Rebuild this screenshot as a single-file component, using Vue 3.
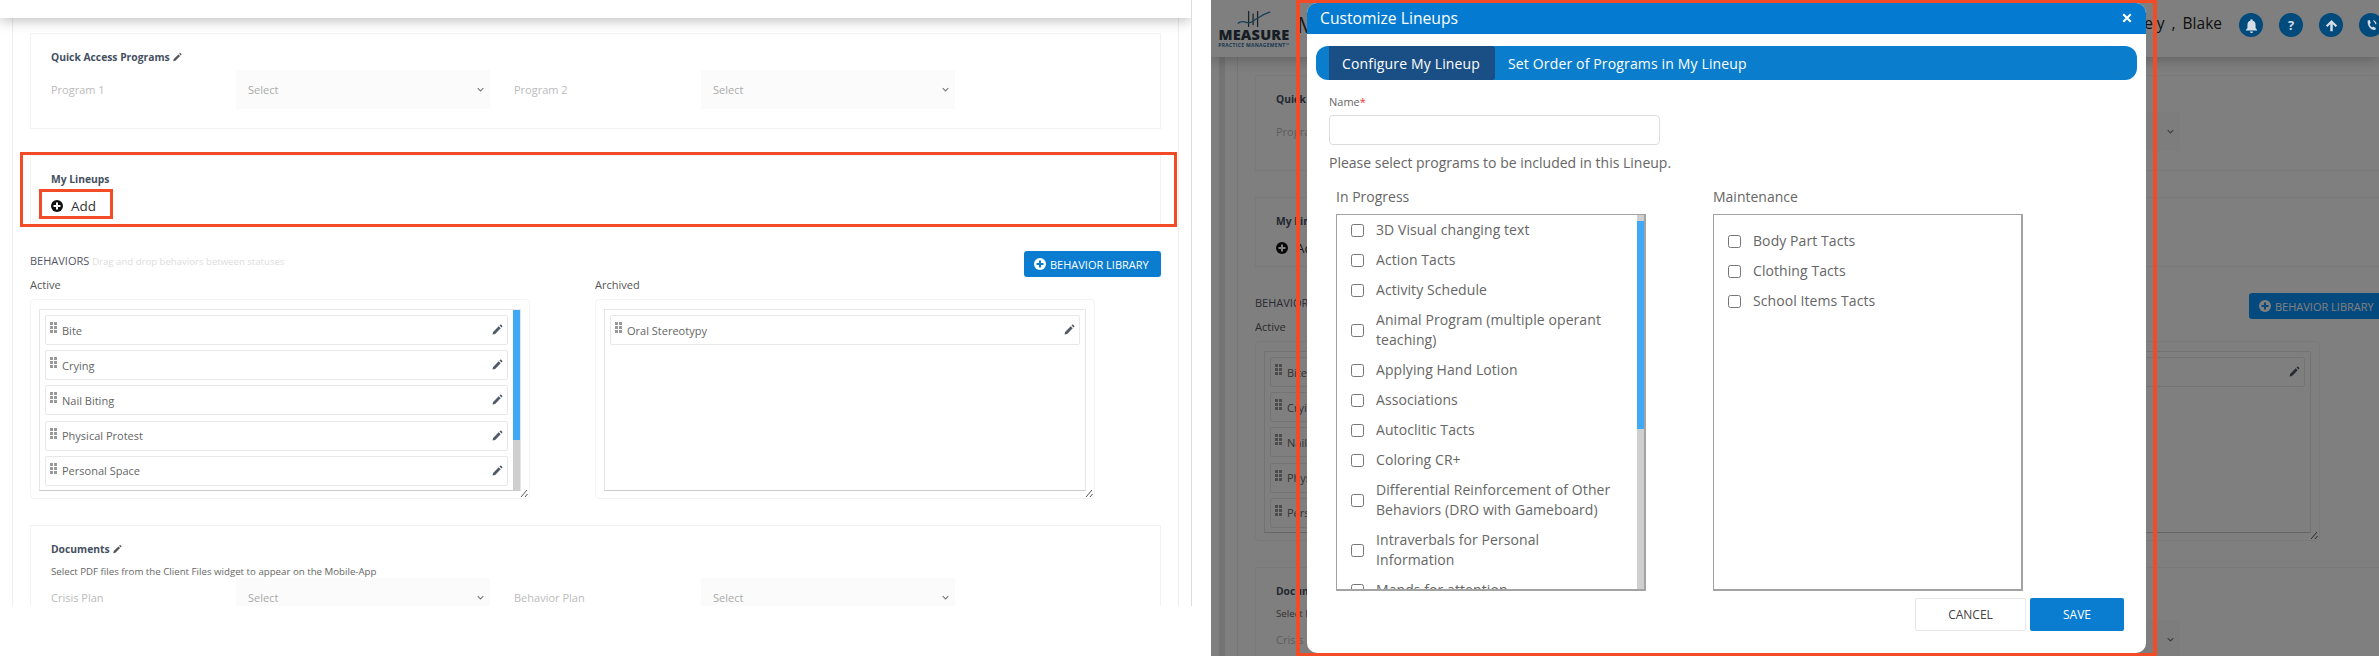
<script setup>
const screens = [
  { id: 'plain', annotated: true },
  { id: 'dimmed', annotated: false },
]
const active = ['Bite', 'Crying', 'Nail Biting', 'Physical Protest', 'Personal Space']
const archived = ['Oral Stereotypy']
const progress = [
  '3D Visual changing text',
  'Action Tacts',
  'Activity Schedule',
  'Animal Program (multiple operant teaching)',
  'Applying Hand Lotion',
  'Associations',
  'Autoclitic Tacts',
  'Coloring CR+',
  'Differential Reinforcement of Other Behaviors (DRO with Gameboard)',
  'Intraverbals for Personal Information',
  'Mands for attention',
]
const maintenance = ['Body Part Tacts', 'Clothing Tacts', 'School Items Tacts']
const pencil = 'M3 21l1.2-5.2L15.4 4.6l4 4L8.2 19.8zM17 3l1.4-1.4a1.6 1.6 0 0 1 2.2 0l1.8 1.8a1.6 1.6 0 0 1 0 2.2L21 7z'
const columns = [
  { title: 'Active', rows: active, scroll: true },
  { title: 'Archived', rows: archived, scroll: false },
]
</script>

<template>
  <div class="sheet">
    <section v-for="s in screens" :key="s.id" class="pane" :class="s.id">
      <div class="screen">
        <header class="topbar">
          <template v-if="!s.annotated">
            <div class="logo">
              <svg class="logo-mark" viewBox="0 0 40 20" width="40" height="18">
                <path d="M14 1v18M19 4v13M24 1v18" stroke="#3a4654" stroke-width="1.4" fill="none" />
                <path d="M2 15c6-6 10 2 16-2s10-8 20-11" stroke="#2f7fa8" stroke-width="1.4" fill="none" />
              </svg>
              <span class="logo-name">MEASURE</span>
              <span class="logo-sub">PRACTICE MANAGEMENT™</span>
            </div>
            <span class="crumb">M</span>
            <span class="user">Neely , Blake</span>
            <div class="actions">
              <span class="round">
                <svg viewBox="0 0 24 24" width="15" height="15"><path d="M12 2a2 2 0 0 0-2 2v.5A6.5 6.5 0 0 0 5.5 11v5L3 19v1h18v-1l-2.500-3v-5A6.500 6.500 0 0 0 14 4.500V4a2 2 0 0 0-2-2zM9.500 21.500a2.500 2.500 0 0 0 5 0z" /></svg>
              </span>
              <span class="round"><b>?</b></span>
              <span class="round">
                <svg viewBox="0 0 24 24" width="15" height="15"><path d="M12 3l9 9-2.500 2.500L14 10v11h-4V10l-4.500 4.500L3 12z" /></svg>
              </span>
              <span class="round">
                <svg viewBox="0 0 24 24" width="15" height="15"><path d="M6 4l3-1 2 5-2 1.500c.6 2.500 2 4.500 4 5.500l1.500-1.500 4.500 2.500-1 3c-7 1-13.500-7-12-15.500zM15 3c3 1 5 4 5 7h-2c0-2-1.500-4-3-5z" /></svg>
              </span>
            </div>
          </template>
        </header>

        <main class="main">
          <div class="card quick">
            <h3 class="card-title">Quick Access Programs
              <svg class="pen" viewBox="0 0 24 24" width="10" height="11"><path :d="pencil" /></svg>
            </h3>
            <div class="fields">
              <label class="f-label">Program 1</label>
              <div class="select">Select<svg viewBox="0 0 10 6" width="7" height="5"><path d="M1 1l4 4 4-4" fill="none" stroke="#777" stroke-width="1.500" /></svg></div>
              <label class="f-label second">Program 2</label>
              <div class="select">Select<svg viewBox="0 0 10 6" width="7" height="5"><path d="M1 1l4 4 4-4" fill="none" stroke="#777" stroke-width="1.500" /></svg></div>
            </div>
          </div>

          <div class="card lineups">
            <h3 class="card-title">My Lineups</h3>
            <div class="add">
              <svg viewBox="0 0 24 24" width="12" height="12"><circle cx="12" cy="12" r="12" fill="#111" /><path d="M10 5h4v5h5v4h-5v5h-4v-5H5v-4h5z" fill="#fff" /></svg>
              <span>Add</span>
            </div>
            <template v-if="s.annotated">
              <span class="mark mark-wide"></span>
              <span class="mark mark-add"></span>
            </template>
          </div>

          <div class="behaviors">
            <div class="b-head">
              <p class="b-title">BEHAVIORS <span>Drag and drop behaviors between statuses</span></p>
              <button class="lib">
                <svg viewBox="0 0 24 24" width="12" height="12"><circle cx="12" cy="12" r="12" fill="#fff" /><path d="M10 5h4v5h5v4h-5v5h-4v-5H5v-4h5z" class="lib-plus" /></svg>
                BEHAVIOR LIBRARY
              </button>
            </div>
            <div class="b-cols">
              <div v-for="c in columns" :key="c.title" class="b-col">
                <div class="b-label">{{ c.title }}</div>
                <div class="b-outer">
                  <div class="b-inner">
                    <div class="b-rows">
                      <div v-for="r in c.rows" :key="r" class="b-row">
                        <span class="grip"><i v-for="n in 6" :key="n"></i></span>
                        <span class="b-name">{{ r }}</span>
                        <svg class="row-pen" viewBox="0 0 24 24" width="12" height="12"><path :d="pencil" /></svg>
                      </div>
                    </div>
                    <div v-if="c.scroll" class="bar"><span class="thumb"></span></div>
                  </div>
                  <svg class="resize" viewBox="0 0 8 8" width="8" height="8"><path d="M1 8l6-7M5 8l2.500-3" stroke="#555" fill="none" /></svg>
                </div>
              </div>
            </div>
          </div>

          <div class="card documents">
            <h3 class="card-title">Documents
              <svg class="pen" viewBox="0 0 24 24" width="10" height="11"><path :d="pencil" /></svg>
            </h3>
            <p class="doc-note">Select PDF files from the Client Files widget to appear on the Mobile-App</p>
            <div class="fields">
              <label class="f-label">Crisis Plan</label>
              <div class="select">Select<svg viewBox="0 0 10 6" width="7" height="5"><path d="M1 1l4 4 4-4" fill="none" stroke="#777" stroke-width="1.500" /></svg></div>
              <label class="f-label second">Behavior Plan</label>
              <div class="select">Select<svg viewBox="0 0 10 6" width="7" height="5"><path d="M1 1l4 4 4-4" fill="none" stroke="#777" stroke-width="1.500" /></svg></div>
            </div>
          </div>
        </main>
        <div v-if="!s.annotated" class="backdrop"></div>
      </div>

      <template v-if="!s.annotated">
        <div class="dialog">
          <div class="m-head">
            <span>Customize Lineups</span>
            <svg viewBox="0 0 12 12" width="10" height="10"><path d="M1.500 1.500l9 9M10.500 1.500l-9 9" stroke="#fff" stroke-width="2.400" /></svg>
          </div>
          <div class="tabs">
            <span class="tab on">Configure My Lineup</span>
            <span class="tab">Set Order of Programs in My Lineup</span>
          </div>
          <div class="m-body">
            <label class="name-label">Name<em>*</em></label>
            <input class="name-input" type="text" />
            <p class="hint">Please select programs to be included in this Lineup.</p>
            <div class="lists">
              <div class="list-col">
                <div class="list-title">In Progress</div>
                <div class="list">
                  <div class="list-items">
                    <label v-for="p in progress" :key="p" class="item">
                      <input type="checkbox" /><span>{{ p }}</span>
                    </label>
                  </div>
                  <div class="list-bar"><span class="cap"></span><span class="thumb"></span></div>
                </div>
              </div>
              <div class="list-col">
                <div class="list-title">Maintenance</div>
                <div class="list">
                  <div class="list-items roomy">
                    <label v-for="p in maintenance" :key="p" class="item">
                      <input type="checkbox" /><span>{{ p }}</span>
                    </label>
                  </div>
                </div>
              </div>
            </div>
            <div class="m-foot">
              <button class="cancel">CANCEL</button>
              <button class="save">SAVE</button>
            </div>
          </div>
        </div>
        <span class="mark mark-modal"></span>
      </template>
    </section>
  </div>
</template>

<style>
html, body { margin: 0; background: #fff; }
</style>

<style scoped>
* { box-sizing: border-box; }
.sheet {
  display: flex;
  width: 2379px;
  height: 656px;
  overflow: hidden;
  background: #fff;
  font-family: "Open Sans", "Noto Sans", sans-serif;
  color: #555;
}
.pane { position: relative; flex: none; height: 656px; }
.pane.plain { width: 1200px; }
.pane.dimmed { width: 1179px; padding-left: 11px; }
.screen { position: relative; height: 100%; overflow: hidden; background: #fff; }
.plain .screen { width: 1192px; height: 606px; border-right: 1px solid #ddd; }
.dimmed .screen { width: 1168px; }

.topbar {
  position: relative;
  display: flex;
  align-items: center;
  height: 18px;
  background: #fff;
  box-shadow: 0 2px 14px rgba(0, 0, 0, .28);
}
.dimmed .topbar { height: 57px; padding-left: 7px; }
.logo { display: flex; flex-direction: column; align-items: center; width: 72px; margin-top: 2px; }
.logo-mark { display: block; }
.logo-name { font: 800 14.500px/14px "Open Sans", sans-serif; color: #2e3a48; letter-spacing: .2px; }
.logo-sub { font: 700 5px/7px "Open Sans", sans-serif; color: #2f6f9f; letter-spacing: .3px; white-space: nowrap; }
.crumb { margin-left: 7px; margin-top: -10px; font-size: 22px; color: #333; }
.user { position: absolute; right: 157px; top: 11px; font-size: 15.500px; word-spacing: 3px; line-height: 24px; color: #222; }
.actions { position: absolute; z-index: 3; left: 1028px; top: 13px; display: flex; gap: 16px; }
.round {
  display: flex;
  align-items: center;
  justify-content: center;
  width: 24px;
  height: 24px;
  border-radius: 50%;
  background: #014a7c;
  color: #d5dde5;
  font-size: 13px;
  flex: none;
}
.round svg { fill: #d5dde5; }

.main {
  width: 1167px;
  height: 100%;
  margin-left: 12px;
  padding: 15px 17px 0;
  border-left: 1px solid #eee;
  border-right: 1px solid #eee;
}
.dimmed .main { margin-left: 26px; padding-top: 18px; box-shadow: -12px 0 0 #fff, -18px 0 0 #e8e8e8; }

.card { position: relative; border: 1px solid #f2f2f2; padding: 14px 20px 0; }
.quick { height: 96px; }
.lineups { height: 70px; margin-top: 26px; }
.documents { height: 160px; margin-top: 26px; }
.card-title { margin: 0; font-size: 10.300px; line-height: 18px; font-weight: 700; color: #45505f; }
.pen { vertical-align: -2px; fill: #555; }
.fields { display: grid; grid-template-columns: 185px 254px 211px 254px; align-items: center; margin-top: 4px; }
.f-label { font-size: 11px; color: #bbb; }
.f-label.second { padding-left: 24px; }
.select {
  display: flex;
  align-items: center;
  justify-content: space-between;
  height: 39px;
  padding: 0 6px 0 12px;
  background: #fbfbfb;
  font-size: 11px;
  color: #aaa;
}
.add { display: flex; align-items: center; gap: 8px; height: 20px; margin-top: 8px; font-size: 13.500px; color: #333; }

.mark { position: absolute; z-index: 4; border: 3px solid #f44b27; pointer-events: none; }
.mark-wide { left: -11px; top: -4px; width: 1157px; height: 75px; }
.mark-add { left: 8px; top: 33px; width: 74px; height: 30px; }
.mark-modal { left: 96px; top: -1px; width: 861px; height: 658px; border-width: 4px; }

.behaviors { margin-top: 26px; }
.b-head { display: flex; justify-content: space-between; align-items: center; height: 26px; }
.b-title { margin: 0 0 8px; font-size: 11px; color: #556; }
.b-title span { color: #ddd; font-size: 9.600px; }
.lib {
  display: flex;
  align-items: center;
  gap: 4px;
  height: 26px;
  width: 137px;
  padding: 0 0 0 10px;
  border: 0;
  border-radius: 3px;
  background: #0a7dd0;
  color: #fff;
  font: 11px "Open Sans", sans-serif;
}
.lib-plus { fill: #0a7dd0; }
.dimmed .lib { background: #0894fc; }
.dimmed .lib-plus { fill: #0894fc; }
.b-cols { display: flex; margin-top: -1px; }
.b-col { width: 565px; flex: none; }
.b-label { font-size: 11px; line-height: 18px; margin-bottom: 5px; color: #555; }
.b-outer { position: relative; width: 500px; height: 200px; padding: 9px 8px; border: 1px solid #f3f3f3; border-radius: 4px; }
.b-inner { display: flex; height: 182px; overflow: hidden; border: 1px solid #e6e6e6; border-bottom-color: #ccc; }
.b-rows { flex: 1; min-width: 0; padding: 5px 5px 0; }
.b-row {
  display: flex;
  align-items: center;
  height: 30px;
  margin-bottom: 5.200px;
  padding: 0 4px;
  border: 1px solid #e8e8e8;
  border-radius: 2px;
  font-size: 11px;
}
.grip { display: grid; grid-template-columns: 3px 3px; gap: 1px; width: 7px; margin-top: -5px; margin-right: 5px; }
.grip i { width: 3px; height: 3px; background: #999; }
.b-name { flex: 1; color: #666; }
.row-pen { fill: #505a68; }
.bar { display: flex; flex: none; width: 7px; background: #cfcfcf; }
.bar .thumb { width: 100%; height: 130px; background: #3fa9f5; }
.resize { position: absolute; right: 1px; bottom: 1px; }

.doc-note { margin: 5px 0 0; font-size: 9.700px; line-height: 18px; color: #666; }
.documents .fields { margin-top: -3px; }

.backdrop { position: absolute; inset: 0; z-index: 2; background: rgba(0, 0, 0, .5); }

.dialog {
  position: absolute;
  z-index: 3;
  left: 107px;
  top: 3px;
  width: 839px;
  height: 650px;
  overflow: hidden;
  border-radius: 10px;
  background: #fff;
}
.m-head {
  display: flex;
  align-items: center;
  justify-content: space-between;
  height: 31px;
  padding: 0 14px 1px 13px;
  background: #047bd0;
  color: #fff;
  font-size: 15.700px;
}
.tabs {
  display: flex;
  align-items: stretch;
  height: 34px;
  margin: 12px 9px 0;
  padding-left: 13px;
  border-radius: 12px;
  background: #0a7ecc;
}
.tab { display: flex; align-items: center; padding: 0 13px; font-size: 14px; letter-spacing: .15px; color: #fff; }
.tab.on { width: 166px; border-radius: 0 3px 3px 0; background: #1a4f85; }
.m-body { padding: 14px 22px 0; }
.name-label { display: block; font-size: 11px; line-height: 16px; color: #666; }
.name-label em { color: #e33; font-style: normal; }
.name-input { display: block; width: 331px; height: 30px; margin-top: 5px; border: 1px solid #ddd; border-radius: 4px; background: #fff; }
.hint { margin: 8px 0 0; font-size: 14px; line-height: 20px; color: #666; }
.lists { display: flex; gap: 67px; margin-top: 14px; padding-left: 7px; }
.list-col { width: 310px; }
.list-title { margin-bottom: 7px; font-size: 14px; line-height: 20px; color: #666; }
.list { display: flex; height: 377px; overflow: hidden; border-style: solid; border-color: #a3a3a3; border-width: 1.500px 2px 2px 1.500px; }
.list-items { flex: 1; min-width: 0; padding: 5px 15px 0 14px; }
.list-items.roomy { padding-top: 16px; }
.item { display: flex; align-items: center; gap: 12px; width: 285px; margin-bottom: 10px; font-size: 14px; letter-spacing: .08px; line-height: 20px; color: #666; }
.item input { flex: none; width: 13px; height: 13px; margin: 0; }
.item span { width: 240px; }
.list-bar { display: flex; flex-direction: column; flex: none; width: 7px; background: #cfcfcf; }
.list-bar .cap { height: 6px; }
.list-bar .thumb { height: 208px; background: #3fa9f5; }
.m-foot { display: flex; justify-content: flex-end; gap: 4px; margin-top: 7px; }
.m-foot button { height: 33px; border-radius: 2px; font: 12px "Open Sans", sans-serif; }
.cancel { width: 111px; border: 1px solid #e8e8e8; background: #fff; color: #444; }
.save { width: 94px; border: 0; background: #0a7dd0; color: #fff; }
</style>
